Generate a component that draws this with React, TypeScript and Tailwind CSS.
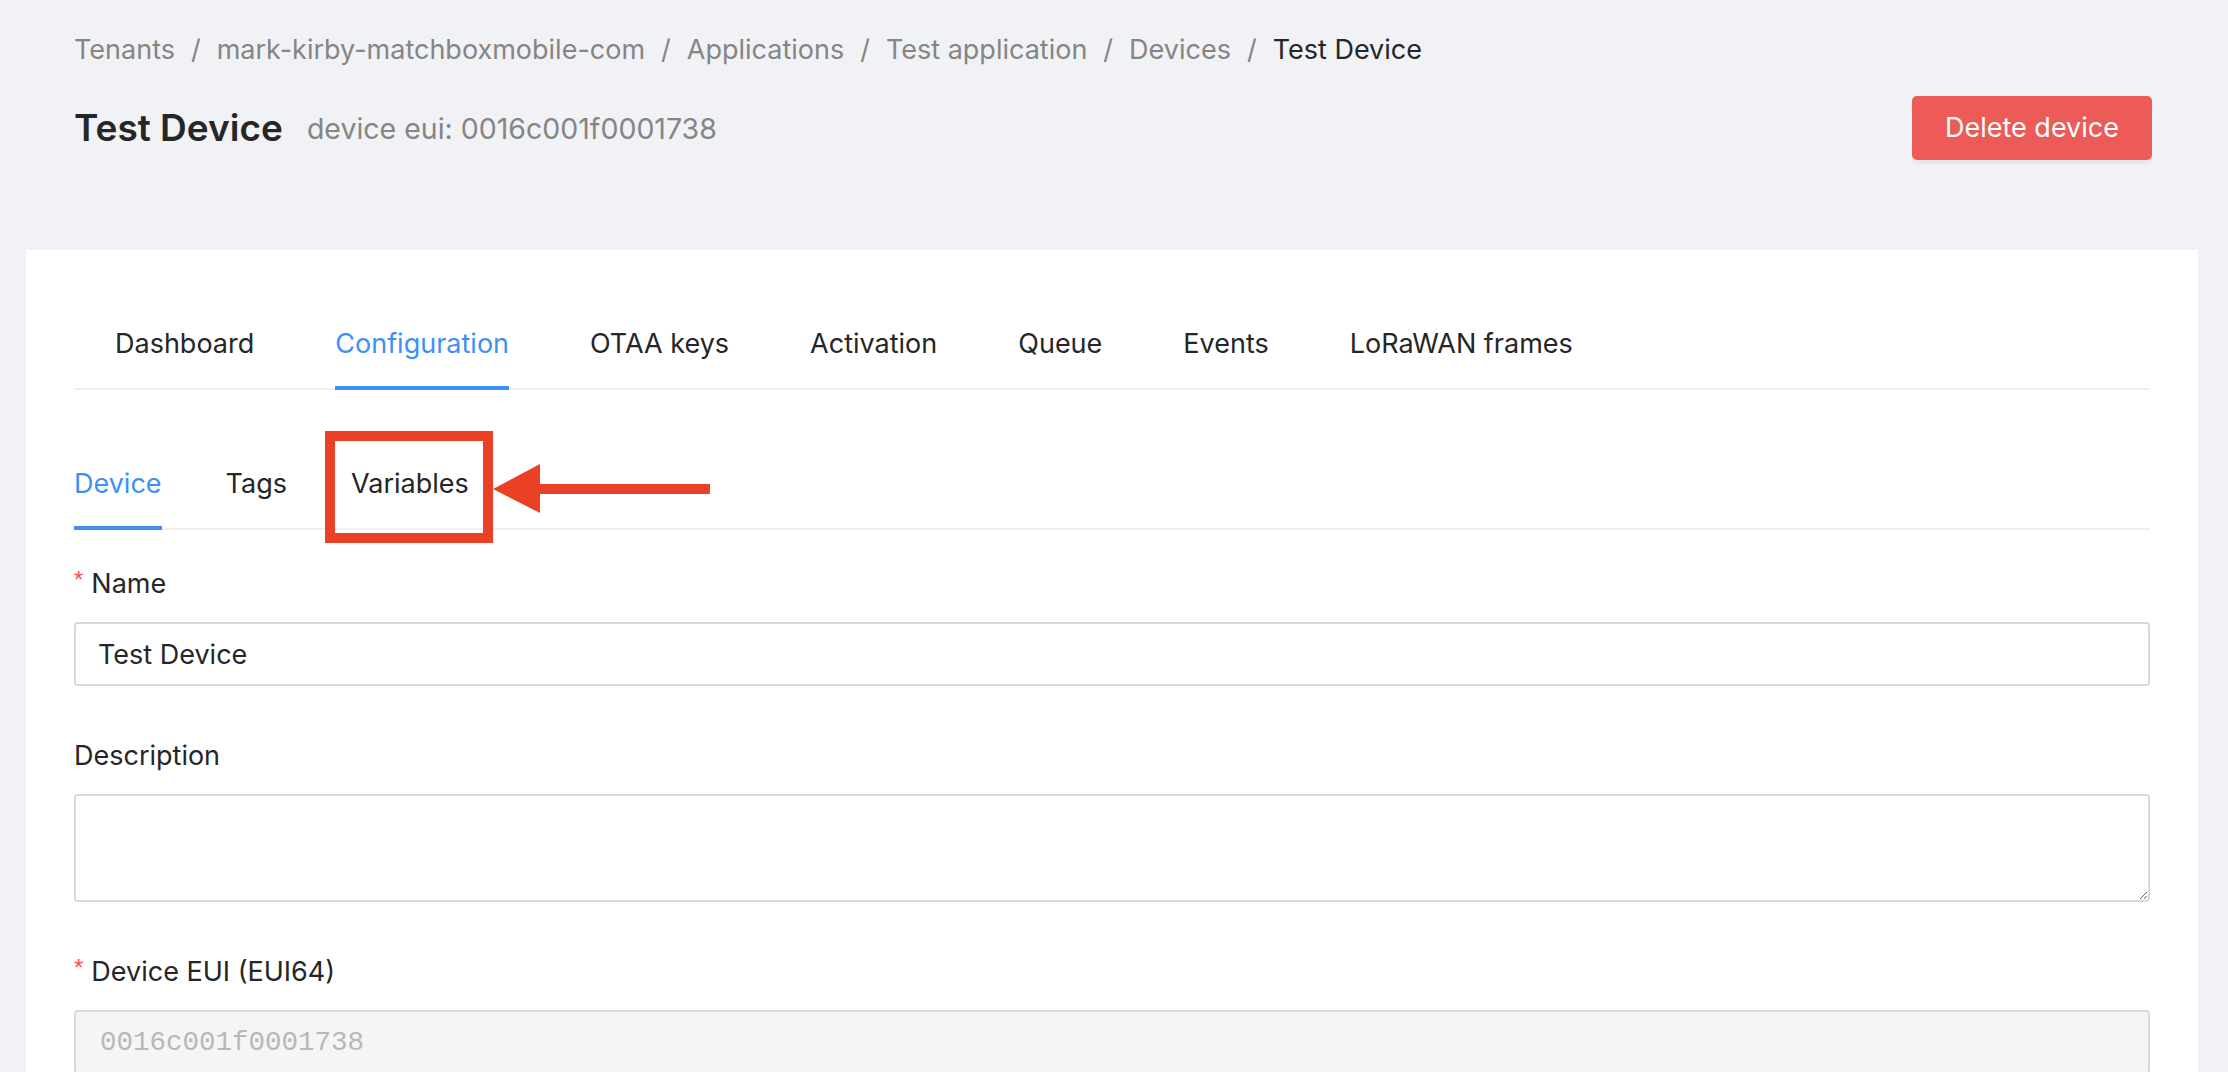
import React from "react"

const crumbs = ["Tenants", "mark-kirby-matchboxmobile-com", "Applications", "Test application", "Devices"]
const mainTabs = ["Dashboard", "Configuration", "OTAA keys", "Activation", "Queue", "Events", "LoRaWAN frames"]

// Libellé de formulaire, avec astérisque rouge pour les champs requis.
function Label({ text, required }: { text: string; required?: boolean }) {
  return (
    <div className="pb-[16px] text-[27px] leading-[44px] text-[#262626]">
      {required && (
        <span className="mr-[8px] inline-block align-top text-[24px] leading-[36px] text-[#ff4d4f] [font-family:'Liberation_Sans',sans-serif]">
          *
        </span>
      )}
      {text}
    </div>
  )
}

export default function App() {
  return (
    <div className="min-h-screen bg-[#f0f2f5] pt-[28px] text-[#262626] [font-family:Inter,'Noto_Sans',sans-serif]">
      <div className="px-[74px]">
        <nav className="flex items-center text-[27px] leading-[44px] text-[#858585]">
          {crumbs.map((c) => (
            <React.Fragment key={c}>
              <span>{c}</span>
              <span className="mx-[16px]">/</span>
            </React.Fragment>
          ))}
          <span className="text-[#262626]">Test Device</span>
        </nav>

        <div className="mt-[24px] flex h-[64px] items-center justify-between">
          <div className="flex items-center">
            <h1 className="text-[37px] font-semibold leading-[64px] text-[#262626]">Test Device</h1>
            <span className="ml-[24px] pt-[2px] text-[28.5px] text-[#858585]">device eui: 0016c001f0001738</span>
          </div>
          <button className="mr-[2px] h-[64px] rounded-[5px] bg-[#ec5b57] px-[33px] text-[27px] text-white shadow-[0_4px_0_rgba(0,0,0,0.045)]">
            Delete device
          </button>
        </div>
      </div>

      <div className="ml-[26px] mr-[30px] mt-[90px] bg-white px-[48px] pb-[48px] pt-[48px]">
        <div className="flex gap-[81px] border-b-2 border-[#f0f0f0] pl-[41px]">
          {mainTabs.map((t) => (
            <div
              key={t}
              className={`-mb-[2px] border-b-4 pb-[20px] pt-[24px] text-[27px] leading-[44px] ${
                t === "Configuration" ? "border-[#3d91f5] text-[#3d91f5]" : "border-transparent text-[#262626]"
              }`}
            >
              {t}
            </div>
          ))}
        </div>

        <div className="mt-[48px] flex gap-[64px] border-b-2 border-[#f0f0f0]">
          <div className="-mb-[2px] border-b-4 border-[#3d91f5] pb-[20px] pt-[24px] text-[27px] leading-[44px] text-[#3d91f5]">
            Device
          </div>
          <div className="-mb-[2px] border-b-4 border-transparent pb-[20px] pt-[24px] text-[27px] leading-[44px]">Tags</div>
          <div className="relative -mb-[2px] border-b-4 border-transparent pb-[20px] pt-[24px] text-[27px] leading-[44px]">
            Variables
            {/* annotation : cadre rouge + flèche */}
            <span className="absolute -bottom-[17px] -left-[26px] -right-[24px] -top-[7px] border-[10px] border-[#ea4025]" />
            <svg className="absolute left-[calc(100%+24px)] top-[26px]" width="217" height="50" viewBox="0 0 217 50">
              <polygon points="0,25 47,0 47,49" fill="#ea4025" />
              <rect x="46" y="20" width="171" height="10" fill="#ea4025" />
            </svg>
          </div>
        </div>

        <form className="mt-[32px]">
          <Label text="Name" required />
          <input
            defaultValue="Test Device"
            className="block h-[64px] w-full rounded-[4px] border-2 border-[#d9d9d9] px-[22px] text-[27px] text-[#262626] outline-none"
          />

          <div className="mt-[48px]">
            <Label text="Description" />
            <textarea className="block h-[108px] w-full rounded-[4px] border-2 border-[#d9d9d9] px-[22px] py-[8px] text-[27px] outline-none" />
          </div>

          <div className="mt-[48px]">
            <Label text="Device EUI (EUI64)" required />
            <input
              disabled
              defaultValue="0016c001f0001738"
              className="block h-[64px] w-full rounded-[4px] border-2 border-[#d9d9d9] bg-[#f5f5f5] px-[24px] text-[27.5px] text-[#b8b8b8] [font-family:'Liberation_Mono',monospace]"
            />
          </div>
        </form>
      </div>
    </div>
  )
}
